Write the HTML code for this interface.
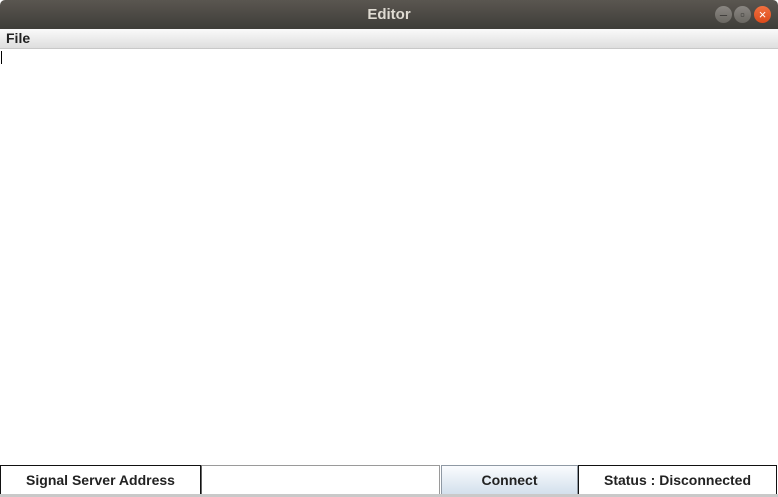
<!DOCTYPE html>
<html><head><style>
*{margin:0;padding:0;box-sizing:border-box}
body{width:778px;height:497px;overflow:hidden;background:#fff;font-family:"Liberation Sans",sans-serif;position:relative}
.tb{position:absolute;left:0;top:0;width:778px;height:29px;background:linear-gradient(#5a5650,#3e3d39);border-radius:5px 5px 0 0;color:#dfdbd2;font-weight:bold;font-size:15px;text-align:center;line-height:29px}
.btn{position:absolute;top:6px;width:17px;height:17px;border-radius:50%;background:linear-gradient(#8a8782,#6a6762);color:#3a3936;font-size:13px;line-height:17px;text-align:center}
.menu{position:absolute;top:29px;left:0;width:778px;height:20px;background:linear-gradient(#fafafa,#dedede);border-bottom:1px solid #c8c8c8;font-size:14px;font-weight:bold;color:#222;padding-left:6px;line-height:19px}
.caret{position:absolute;left:1px;top:51px;width:1px;height:13px;background:#000}
.bot{position:absolute;top:465px;height:30px;font-size:14px;font-weight:bold;color:#222;text-align:center;line-height:29px}
.foot{position:absolute;left:0;top:494px;width:778px;height:3px;background:#c9c9c9}
</style></head><body>
<div class="tb">Editor</div>
<div class="btn" style="left:715px">–</div>
<div class="btn" style="left:734px">▫</div>
<div class="btn" style="left:754px;background:linear-gradient(#f2703f,#dc4a1b);color:#fff">×</div>
<div class="menu">File</div>
<div class="caret"></div>
<div class="bot" style="left:0;width:201px;border:1px solid #111">Signal Server Address</div>
<div class="bot" style="left:201px;width:239px;border:1px solid #9a9a9a;border-left-color:#666"></div>
<div class="bot" style="left:441px;width:137px;border:1px solid #8f99a4;background:linear-gradient(#fafcfe,#d3e0ec)">Connect</div>
<div class="bot" style="left:578px;width:199px;border:1px solid #111">Status : Disconnected</div>
<div class="foot"></div>
</body></html>
